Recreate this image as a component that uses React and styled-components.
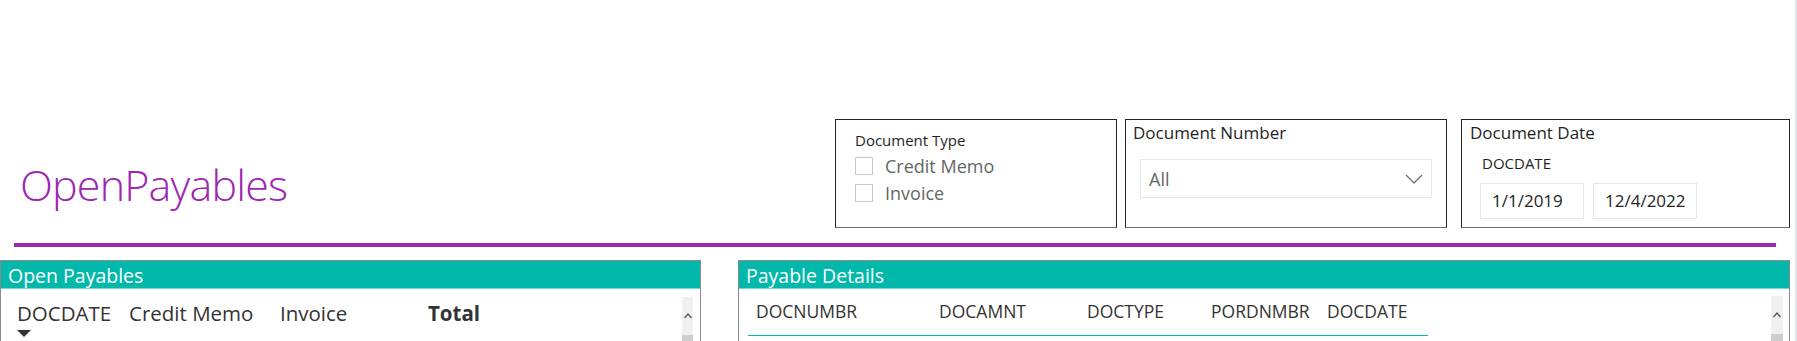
import React from 'react';
import styled, { createGlobalStyle } from 'styled-components';

const GlobalStyle = createGlobalStyle`
  html, body {
    margin: 0;
    padding: 0;
    background: #ffffff;
  }
  body {
    font-family: "Open Sans", "Noto Sans", sans-serif;
    color: #252423;
  }
  * {
    box-sizing: border-box;
  }
`;

const Page = styled.div`
  width: 1797px;
  height: 341px;
  overflow: hidden;
  border-right: 2px solid #e2e2ec;
  background: #ffffff;
`;

const Header = styled.header`
  display: flex;
  align-items: flex-start;
  height: 228px;
  padding: 119px 5px 0 0;
`;

const Title = styled.h1`
  flex: 1;
  margin: 40px 0 0 0;
  padding-left: 20px;
  font-size: 43px;
  font-weight: 300;
  line-height: 1.2;
  color: #9c27b0;
  letter-spacing: -0.8px;
`;

const Slicers = styled.div`
  display: flex;
  align-items: flex-start;
`;

const SlicerBox = styled.div`
  width: ${(props) => props.width}px;
  height: 109px;
  margin-left: ${(props) => props.gap || 0}px;
  border: 1px solid #252423;
  border-bottom-color: #6e6e6e;
  background: #ffffff;
  padding: ${(props) => props.pad || '3px 0 0 7px'};
`;

const SmallTitle = styled.div`
  font-size: 15px;
  line-height: 18px;
  color: #1f1f1f;
`;

const SlicerTitle = styled.div`
  padding-left: ${(props) => props.indent || 0}px;
  font-size: 17px;
  line-height: 20px;
  color: #1f1f1f;
`;

const CheckList = styled.div`
  margin-top: 3px;
`;

const CheckRow = styled.label`
  display: flex;
  align-items: center;
  gap: 12px;
  height: 27px;
  font-size: 18px;
  color: #666666;
`;

const CheckBox = styled.span`
  width: 18px;
  height: 18px;
  border: 1px solid #c8c8c8;
  background: #ffffff;
`;

const Dropdown = styled.div`
  display: flex;
  align-items: center;
  justify-content: space-between;
  width: 292px;
  height: 39px;
  margin: 16px 0 0 7px;
  padding: 0 8px 0 8px;
  border: 1px solid #e6e6e6;
  font-size: 18px;
  color: #666666;
`;

const DateSection = styled.div`
  padding-left: 18px;
`;

const DateLabel = styled(SmallTitle)`
  margin-top: 11px;
  padding-left: 2px;
`;

const DateRow = styled.div`
  display: flex;
  gap: 9px;
  margin-top: 11px;
`;

const DateInput = styled.div`
  width: 104px;
  height: 36px;
  padding-left: 11px;
  border: 1px solid #e6e6e6;
  font-size: 17px;
  line-height: 34px;
  color: #252423;
`;

const Divider = styled.div`
  width: 1762px;
  height: 4px;
  margin: 15px 0 0 14px;
  background: #9c27b0;
`;

const Panels = styled.div`
  display: flex;
  gap: 37px;
  margin-top: 13px;
  padding-right: 5px;
`;

const Panel = styled.section`
  width: ${(props) => props.width}px;
  height: 120px;
  border: 1px solid #8a8a8a;
  border-bottom: none;
  background: #ffffff;
`;

const PanelHeader = styled.div`
  height: 28px;
  padding: 2px 0 0 7px;
  background: #01b8aa;
  border-bottom: 1px solid #74d6ce;
  color: #ffffff;
  font-size: 19.5px;
  line-height: 25px;
`;

const PanelBody = styled.div`
  display: flex;
  align-items: flex-start;
`;

const Table = styled.div`
  flex: 1;
`;

const ColumnRow = styled.div`
  display: grid;
  grid-template-columns: ${(props) => props.cols};
  align-items: start;
  color: #333333;
`;

const LeftColumns = styled(ColumnRow)`
  padding: 11px 0 0 16px;
  font-size: 20.5px;
  line-height: 26px;
`;

const RightColumns = styled(ColumnRow)`
  width: 680px;
  height: 47px;
  margin-left: 9px;
  padding: 10px 0 0 8px;
  font-size: 17.5px;
  line-height: 24px;
  border-bottom: 1px solid #01b8aa;
`;

const HeadCell = styled.div`
  font-weight: ${(props) => (props.bold ? 700 : 400)};
  white-space: nowrap;
`;

const SortArrow = styled.div`
  width: 0;
  height: 0;
  margin-top: 4px;
  border-left: 7px solid transparent;
  border-right: 7px solid transparent;
  border-top: 7px solid #333333;
`;

const ScrollTrack = styled.div`
  display: flex;
  flex-direction: column;
  align-items: center;
  width: ${(props) => props.width}px;
  height: 60px;
  margin: ${(props) => props.top}px ${(props) => props.right}px 0 0;
  background: #f0f0f0;
`;

const ScrollArrow = styled.div`
  display: flex;
  align-items: center;
  justify-content: center;
  height: ${(props) => props.height}px;
`;

const ScrollThumb = styled.div`
  width: 100%;
  flex: 1;
  background: #cdcdcd;
`;

const Chevron = () => (
  <svg width="18" height="10" viewBox="0 0 18 10">
    <polyline points="1,1 9,9 17,1" fill="none" stroke="#666666" strokeWidth="1.2" />
  </svg>
);

const UpCaret = () => (
  <svg width="8" height="6" viewBox="0 0 8 6">
    <polyline points="0.5,5 4,1 7.5,5" fill="none" stroke="#555555" strokeWidth="1.3" />
  </svg>
);

const Scrollbar = ({ width, top, right, arrowHeight }) => (
  <ScrollTrack width={width} top={top} right={right}>
    <ScrollArrow height={arrowHeight}>
      <UpCaret />
    </ScrollArrow>
    <ScrollThumb />
  </ScrollTrack>
);

const detailColumns = ['DOCNUMBR', 'DOCAMNT', 'DOCTYPE', 'PORDNMBR', 'DOCDATE'];

const App = () => {
  return (
    <>
      <GlobalStyle />
      <Page>
        <Header>
          <Title>OpenPayables</Title>
          <Slicers>
            <SlicerBox width={282} pad="11px 0 0 19px">
              <SmallTitle>Document Type</SmallTitle>
              <CheckList>
                <CheckRow>
                  <CheckBox />
                  Credit Memo
                </CheckRow>
                <CheckRow>
                  <CheckBox />
                  Invoice
                </CheckRow>
              </CheckList>
            </SlicerBox>
            <SlicerBox width={322} gap={8}>
              <SlicerTitle>Document Number</SlicerTitle>
              <Dropdown>
                <span>All</span>
                <Chevron />
              </Dropdown>
            </SlicerBox>
            <SlicerBox width={329} gap={14} pad="3px 0 0 0">
              <SlicerTitle indent={8}>Document Date</SlicerTitle>
              <DateSection>
                <DateLabel>DOCDATE</DateLabel>
                <DateRow>
                  <DateInput>1/1/2019</DateInput>
                  <DateInput>12/4/2022</DateInput>
                </DateRow>
              </DateSection>
            </SlicerBox>
          </Slicers>
        </Header>

        <Divider />

        <Panels>
          <Panel width={701}>
            <PanelHeader>Open Payables</PanelHeader>
            <PanelBody>
              <Table>
                <LeftColumns cols="112px 151px 148px auto">
                  <HeadCell>
                    DOCDATE
                    <SortArrow />
                  </HeadCell>
                  <HeadCell>Credit Memo</HeadCell>
                  <HeadCell>Invoice</HeadCell>
                  <HeadCell bold>Total</HeadCell>
                </LeftColumns>
              </Table>
              <Scrollbar width={11} top={8} right={7} arrowHeight={38} />
            </PanelBody>
          </Panel>

          <Panel width={1052}>
            <PanelHeader>Payable Details</PanelHeader>
            <PanelBody>
              <Table>
                <RightColumns cols="183px 148px 124px 116px auto">
                  {detailColumns.map((name) => (
                    <HeadCell key={name}>{name}</HeadCell>
                  ))}
                </RightColumns>
              </Table>
              <Scrollbar width={12} top={7} right={6} arrowHeight={38} />
            </PanelBody>
          </Panel>
        </Panels>
      </Page>
    </>
  );
};

export default App;
